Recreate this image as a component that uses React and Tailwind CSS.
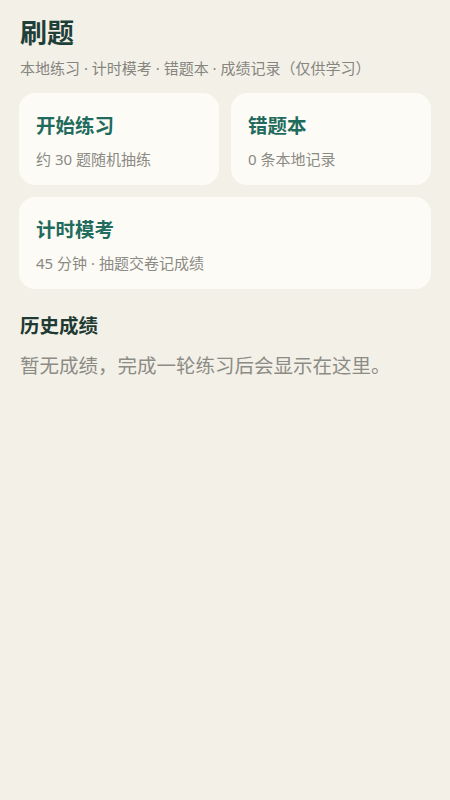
export default function App() {
  const font = { fontFamily: '"Noto Sans", "Noto Sans CJK SC", sans-serif' };
  return (
    <div className="min-h-[800px] w-full bg-[#f3f0e7]" style={font}>
      <div className="px-[19px] pt-[15px]">
        <h1 className="text-[27px] leading-[36px] font-bold text-[#1f4038] pl-[1px]">刷题</h1>
        <p className="mt-[7px] text-[15px] leading-[20px] text-[#85857f] pl-[1px]">
          本地练习 · 计时模考 · 错题本 · 成绩记录（仅供学习）
        </p>
        <div className="mt-[15px] grid grid-cols-2 gap-[12px]">
          <div className="rounded-[16px] bg-[#fdfbf6] px-[17px] pt-[20px] pb-[16px]">
            <div className="text-[19.5px] leading-[26px] font-bold text-[#1f6b5d]">开始练习</div>
            <div className="mt-[10px] text-[15px] leading-[20px] text-[#8a8a84]">约 30 题随机抽练</div>
          </div>
          <div className="rounded-[16px] bg-[#fdfbf6] px-[17px] pt-[20px] pb-[16px]">
            <div className="text-[19.5px] leading-[26px] font-bold text-[#1f6b5d]">错题本</div>
            <div className="mt-[10px] text-[15px] leading-[20px] text-[#8a8a84]">0 条本地记录</div>
          </div>
        </div>
        <div className="mt-[12px] rounded-[16px] bg-[#fdfbf6] px-[17px] pt-[20px] pb-[16px]">
          <div className="text-[19.5px] leading-[26px] font-bold text-[#1f6b5d]">计时模考</div>
          <div className="mt-[10px] text-[15px] leading-[20px] text-[#8a8a84]">45 分钟 · 抽题交卷记成绩</div>
        </div>
        <h2 className="mt-[24px] text-[19.5px] leading-[26px] font-bold text-[#1f3a33] pl-[1px]">历史成绩</h2>
        <p className="mt-[13px] text-[19.5px] leading-[28px] text-[#8c8c86] pl-[1px]">
          暂无成绩，完成一轮练习后会显示在这里。
        </p>
      </div>
    </div>
  );
}
